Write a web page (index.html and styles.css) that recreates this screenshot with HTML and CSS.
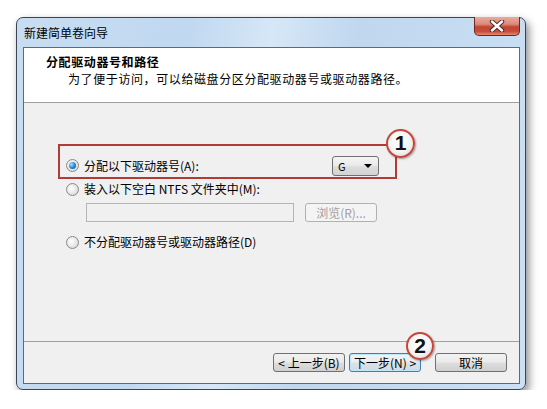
FILE: index.html
```html
<!DOCTYPE html>
<html lang="zh-CN">
<head>
  <meta charset="UTF-8">
  <title>新建简单卷向导</title>
  <link rel="stylesheet" href="styles.css">
</head>
<body>

  <div class="window">
    <div class="titlebar">
      <span class="title">新建简单卷向导</span>
      <div class="close">
        <svg width="16" height="12" viewBox="0 0 16 12">
          <path d="M3 1.5 L13 10.5 M13 1.5 L3 10.5" stroke="#4a2a2a" stroke-width="4.4" stroke-linecap="round"/>
          <path d="M3 1.5 L13 10.5 M13 1.5 L3 10.5" stroke="#ffffff" stroke-width="2.4" stroke-linecap="round"/>
        </svg>
      </div>
    </div>

    <div class="client">
      <div class="header">
        <div class="heading">分配驱动器号和路径</div>
        <div class="subtitle">为了便于访问，可以给磁盘分区分配驱动器号或驱动器路径。</div>
      </div>

      <div class="content">
        <div class="highlight">
          <span class="radio checked"></span>
          <span class="label">分配以下驱动器号(A):</span>
          <div class="select">
            <span>G</span>
            <span class="arrow"></span>
          </div>
          <span class="badge badge-one">1</span>
        </div>

        <div class="option">
          <span class="radio"></span>
          <span class="label">装入以下空白 NTFS 文件夹中(M):</span>
        </div>

        <div class="folder-row">
          <div class="textbox"></div>
          <div class="btn btn-disabled">浏览(R)...</div>
        </div>

        <div class="option option-last">
          <span class="radio"></span>
          <span class="label">不分配驱动器号或驱动器路径(D)</span>
        </div>
      </div>

      <div class="footer">
        <div class="btn">&lt; 上一步(B)</div>
        <div class="btn btn-default">下一步(N) &gt;</div>
        <div class="btn btn-cancel">取消</div>
        <span class="badge badge-two">2</span>
      </div>
    </div>
  </div>

</body>
</html>
```

FILE: styles.css
```css
body {
  margin: 0;
  background: #ffffff;
  font-family: "Noto Sans CJK SC", "DejaVu Sans", sans-serif;
  font-size: 12px;
  color: #000000;
}

.window {
  margin: 17px 0 0 16px;
  width: 510px;
  height: 373px;
  box-sizing: border-box;
  border: 1px solid #3c4452;
  border-radius: 7px;
  padding: 0 5px 5px 6px;
  background: linear-gradient(100deg, #c8ddf2 0%, #c0d8f0 30%, #d6e7f7 45%, #c0d7ee 60%, #cbe0f4 100%);
  box-shadow: 3px 4px 9px rgba(0, 0, 0, 0.45);
  display: flex;
  flex-direction: column;
}

.titlebar {
  height: 29px;
  display: flex;
  align-items: center;
}

.title {
  padding-left: 1px;
  line-height: 14px;
}

.close {
  margin-left: auto;
  align-self: flex-start;
  margin-top: -1px;
  width: 46px;
  height: 19px;
  box-sizing: border-box;
  border: 1px solid #6a2a22;
  border-top: none;
  border-radius: 0 0 5px 5px;
  background: linear-gradient(#eaa99b 0%, #dc8a7a 40%, #c24332 55%, #c94c3a 80%, #e28a70 100%);
  display: flex;
  align-items: center;
  justify-content: center;
}

.client {
  flex: 1;
  border: 1px solid #5d6a7a;
  background: #f0f0f0;
  display: flex;
  flex-direction: column;
}

.header {
  height: 55px;
  box-sizing: border-box;
  background: #ffffff;
  border-bottom: 1px solid #a0a0a0;
  padding: 7px 0 0 22px;
}

.heading {
  font-weight: bold;
  line-height: 14px;
  letter-spacing: 0.6px;
}

.subtitle {
  margin-top: 3px;
  padding-left: 22px;
  line-height: 14px;
  letter-spacing: 0.6px;
}

.content {
  flex: 1;
  padding: 41px 0 0 34px;
  border-bottom: 1px solid #a0a0a0;
}

.highlight {
  position: relative;
  width: 339px;
  height: 35px;
  box-sizing: border-box;
  border: 2px solid #b23b35;
  padding: 8px 0 0 6px;
  display: flex;
  align-items: center;
}

.highlight .select {
  margin-left: auto;
  margin-right: 16px;
}

.option {
  display: flex;
  align-items: center;
  height: 14px;
  margin-top: 3px;
  padding-left: 8px;
}

.option-last {
  margin-top: 13px;
}

.label {
  margin-left: 5px;
  line-height: 14px;
}

.radio {
  width: 13px;
  height: 13px;
  box-sizing: border-box;
  border-radius: 50%;
  border: 1px solid #8a8a8a;
  background: radial-gradient(circle at 40% 40%, #ffffff 0%, #e6e6e6 55%, #c8c8c8 100%);
  flex-shrink: 0;
  display: flex;
  align-items: center;
  justify-content: center;
}

.radio.checked::after {
  content: "";
  width: 7px;
  height: 7px;
  border-radius: 50%;
  background: radial-gradient(circle at 35% 35%, #a6e0ff 0%, #2d8ad6 50%, #0d3f7a 100%);
}

.select {
  width: 47px;
  height: 20px;
  box-sizing: border-box;
  border: 1px solid #707070;
  border-radius: 3px;
  background: linear-gradient(#f4f4f4 0%, #ebebeb 45%, #dcdcdc 55%, #d4d4d4 100%);
  display: flex;
  align-items: center;
  padding: 0 6px 0 5px;
  font-size: 11px;
}

.arrow {
  margin-left: auto;
  width: 0;
  height: 0;
  border-left: 4px solid transparent;
  border-right: 4px solid transparent;
  border-top: 4px solid #000000;
}

.folder-row {
  display: flex;
  gap: 11px;
  margin-top: 7px;
  padding-left: 28px;
}

.textbox {
  width: 208px;
  height: 19px;
  box-sizing: border-box;
  border: 1px solid #b5b5b5;
  background: #f0f0f0;
}

.btn {
  width: 72px;
  height: 19px;
  box-sizing: border-box;
  border: 1px solid #707070;
  border-radius: 3px;
  background: linear-gradient(#f2f2f2 0%, #ebebeb 45%, #dddddd 55%, #cfcfcf 100%);
  display: flex;
  align-items: center;
  justify-content: center;
  line-height: 14px;
}

.btn-disabled {
  border-color: #adb2b5;
  background: #f4f4f4;
  color: #a0a0a0;
}

.btn-default {
  border-color: #3c7fb1;
  box-shadow: inset 0 0 0 1px #bfe6fb;
  background: linear-gradient(#f0f4f7 0%, #e8eef2 45%, #dae2e8 55%, #d2dbe2 100%);
}

.footer {
  position: relative;
  height: 41px;
  display: flex;
  justify-content: flex-end;
  align-items: flex-start;
  padding: 11px 12px 0 0;
  box-sizing: border-box;
  gap: 4px;
}

.btn-cancel {
  margin-left: 10px;
}

.badge {
  position: absolute;
  width: 29px;
  height: 29px;
  box-sizing: border-box;
  border-radius: 50%;
  border: 2.5px solid #c9453b;
  background: radial-gradient(circle at 45% 40%, #ffffff 0%, #f4f4f4 55%, #cfcfcf 100%);
  box-shadow: 1px 1px 2px rgba(0, 0, 0, 0.35);
  font-family: "Liberation Sans", Arial, sans-serif;
  font-weight: bold;
  font-size: 21px;
  line-height: 24px;
  text-align: center;
  color: #111111;
}

.badge-one {
  left: 326px;
  top: -17px;
}

.badge-two {
  left: 382px;
  top: -10px;
  width: 28px;
  height: 28px;
  line-height: 23px;
}
```
